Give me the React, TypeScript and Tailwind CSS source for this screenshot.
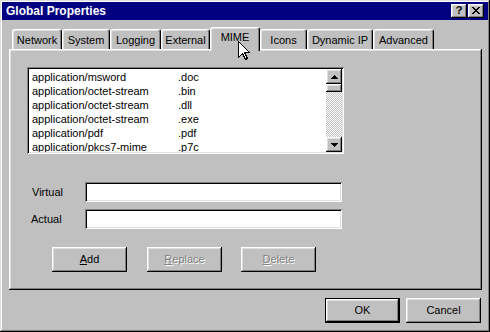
import React from "react";

const raised =
  "shadow-[inset_-1px_-1px_#000,inset_1px_1px_#fff,inset_-2px_-2px_#808080,inset_2px_2px_#dfdfdf]";
const sunken =
  "shadow-[inset_1px_1px_#808080,inset_-1px_-1px_#fff,inset_2px_2px_#000,inset_-2px_-2px_#dfdfdf]";

const tabs: { label: string; w: string; selected?: boolean }[] = [
  { label: "Network", w: "w-[50px]" },
  { label: "System", w: "w-[48px]" },
  { label: "Logging", w: "w-[51px]" },
  { label: "External", w: "w-[49px]" },
  { label: "MIME", w: "w-[50px]", selected: true },
  { label: "Icons", w: "w-[47px]" },
  { label: "Dynamic IP", w: "w-[66px]" },
  { label: "Advanced", w: "w-[61px]" },
];

const rows: [string, string][] = [
  ["application/msword", ".doc"],
  ["application/octet-stream", ".bin"],
  ["application/octet-stream", ".dll"],
  ["application/octet-stream", ".exe"],
  ["application/pdf", ".pdf"],
  ["application/pkcs7-mime", ".p7c"],
];

function Arrow({ down }: { down?: boolean }) {
  return (
    <svg width="7" height="4" viewBox="0 0 7 4" className={down ? "rotate-180" : ""} shapeRendering="crispEdges">
      <path d="M3 0h1v1h1v1h1v1h1v1H0V3h1V2h1V1h1z" fill="#000" />
    </svg>
  );
}

function Btn({ children, disabled, def }: { children: React.ReactNode; disabled?: boolean; def?: boolean }) {
  return (
    <div
      className={`w-[75px] h-[25px] flex items-center justify-center bg-[#c0c0c0] ${raised} ${
        def ? "border border-black" : ""
      } ${disabled ? "text-[#808080] [text-shadow:1px_1px_0_#fff]" : "text-black"}`}
    >
      {children}
    </div>
  );
}

export default function App() {
  return (
    <div
      className={`relative w-[490px] h-[332px] bg-[#c0c0c0] p-[2px] flex flex-col overflow-hidden text-[11px] text-black [font-family:'Liberation_Sans',Arial,sans-serif] shadow-[inset_-1px_-1px_#000,inset_1px_1px_#dfdfdf,inset_-2px_-2px_#808080,inset_2px_2px_#fff]`}
    >
      {/* Title bar */}
      <div className="h-[18px] shrink-0 bg-[#000080] flex items-center justify-between pl-[4px] pr-[4px]">
        <span className="text-white font-bold text-[12px] leading-none">Global Properties</span>
        <div className="flex gap-[1px]">
          <div className={`w-[16px] h-[14px] bg-[#c0c0c0] ${raised} flex items-center justify-center font-bold text-[11px] leading-none pb-[1px]`}>
            ?
          </div>
          <div className={`w-[16px] h-[14px] bg-[#c0c0c0] ${raised} flex items-center justify-center pb-[1px]`}>
            <svg width="8" height="7" viewBox="0 0 8 7" shapeRendering="crispEdges">
              <path d="M0 0h2v1h1v1h2V1h1V0h2v1H7v1H6v1H5v1h1v1h1v1h1v1H6V6H5V5H3v1H2v1H0V6h1V5h1V4h1V3H2V2H1V1H0z" fill="#000" />
            </svg>
          </div>
        </div>
      </div>

      {/* Body */}
      <div className="flex flex-col pl-[7px] pr-[6px]">
        {/* Tabs */}
        <div className="flex items-end h-[22px] mt-[7px] pl-[3px]">
          {tabs.map((t) =>
            t.selected ? (
              <div
                key={t.label}
                className={`${t.w} relative z-10 h-[24px] -mb-[2px] bg-[#c0c0c0] border-l border-t border-r border-white border-r-black rounded-t-[3px] shadow-[inset_-1px_0_#808080,inset_1px_1px_#dfdfdf] flex justify-center pt-[3px] leading-[13px]`}
              >
                {t.label}
              </div>
            ) : (
              <div
                key={t.label}
                className={`${t.w} h-[20px] bg-[#c0c0c0] border-l border-t border-r border-white border-r-black rounded-t-[3px] shadow-[inset_-1px_0_#808080,inset_1px_1px_#dfdfdf] flex justify-center pt-[4px] leading-[13px]`}
              >
                {t.label}
              </div>
            )
          )}
        </div>

        {/* Panel */}
        <div className={`h-[241px] ${raised} pt-[18px] pl-[18px] flex flex-col`}>
          {/* Listbox */}
          <div className={`w-[317px] h-[87px] bg-white ${sunken} p-[2px] flex`}>
            <div className="flex-1 overflow-hidden pt-[1px] pl-[3px]">
              {rows.map(([a, b], i) => (
                <div key={i} className="grid grid-cols-[146px_1fr] h-[14px] leading-[14px] whitespace-nowrap">
                  <span>{a}</span>
                  <span>{b}</span>
                </div>
              ))}
            </div>
            <div className="w-[16px] flex flex-col">
              <div className={`h-[15px] bg-[#c0c0c0] ${raised} flex items-center justify-center`}>
                <Arrow />
              </div>
              <div className={`h-[8px] bg-[#c0c0c0] ${raised}`} />
              <div className="flex-1 bg-[repeating-conic-gradient(#c0c0c0_0%_25%,#ffffff_0%_50%)] bg-[length:2px_2px]" />
              <div className={`h-[15px] bg-[#c0c0c0] ${raised} flex items-center justify-center`}>
                <Arrow down />
              </div>
            </div>
          </div>

          {/* Fields */}
          <div className="flex items-center mt-[28px]">
            <span className="w-[58px] pl-[5px]">Virtual</span>
            <div className={`w-[257px] h-[20px] bg-white ${sunken}`} />
          </div>
          <div className="flex items-center mt-[7px]">
            <span className="w-[58px] pl-[4px]">Actual</span>
            <div className={`w-[257px] h-[20px] bg-white ${sunken}`} />
          </div>

          {/* Buttons */}
          <div className="flex mt-[18px] ml-[25px]">
            <Btn>
              <span className="underline">A</span>dd
            </Btn>
            <div className="ml-[20px]">
              <Btn disabled>
                <span className="underline">R</span>eplace
              </Btn>
            </div>
            <div className="ml-[19px]">
              <Btn disabled>
                <span className="underline">D</span>elete
              </Btn>
            </div>
          </div>
        </div>

        {/* Bottom buttons */}
        <div className="flex justify-end gap-[6px] mt-[8px] pr-[1px]">
          <Btn def>OK</Btn>
          <Btn>Cancel</Btn>
        </div>
      </div>

      {/* Mouse cursor */}
      <svg
        className="absolute left-[238px] top-[41px] z-20"
        width="13"
        height="20"
        viewBox="0 0 13 20"
        shapeRendering="crispEdges"
      >
        <path d="M0.5 0.5 L0.5 16.5 L4.5 12.5 L7.5 18.5 L9.5 17.5 L6.5 11.5 L11.5 11.5 Z" fill="#fff" stroke="#000" strokeWidth="1" />
      </svg>
    </div>
  );
}
